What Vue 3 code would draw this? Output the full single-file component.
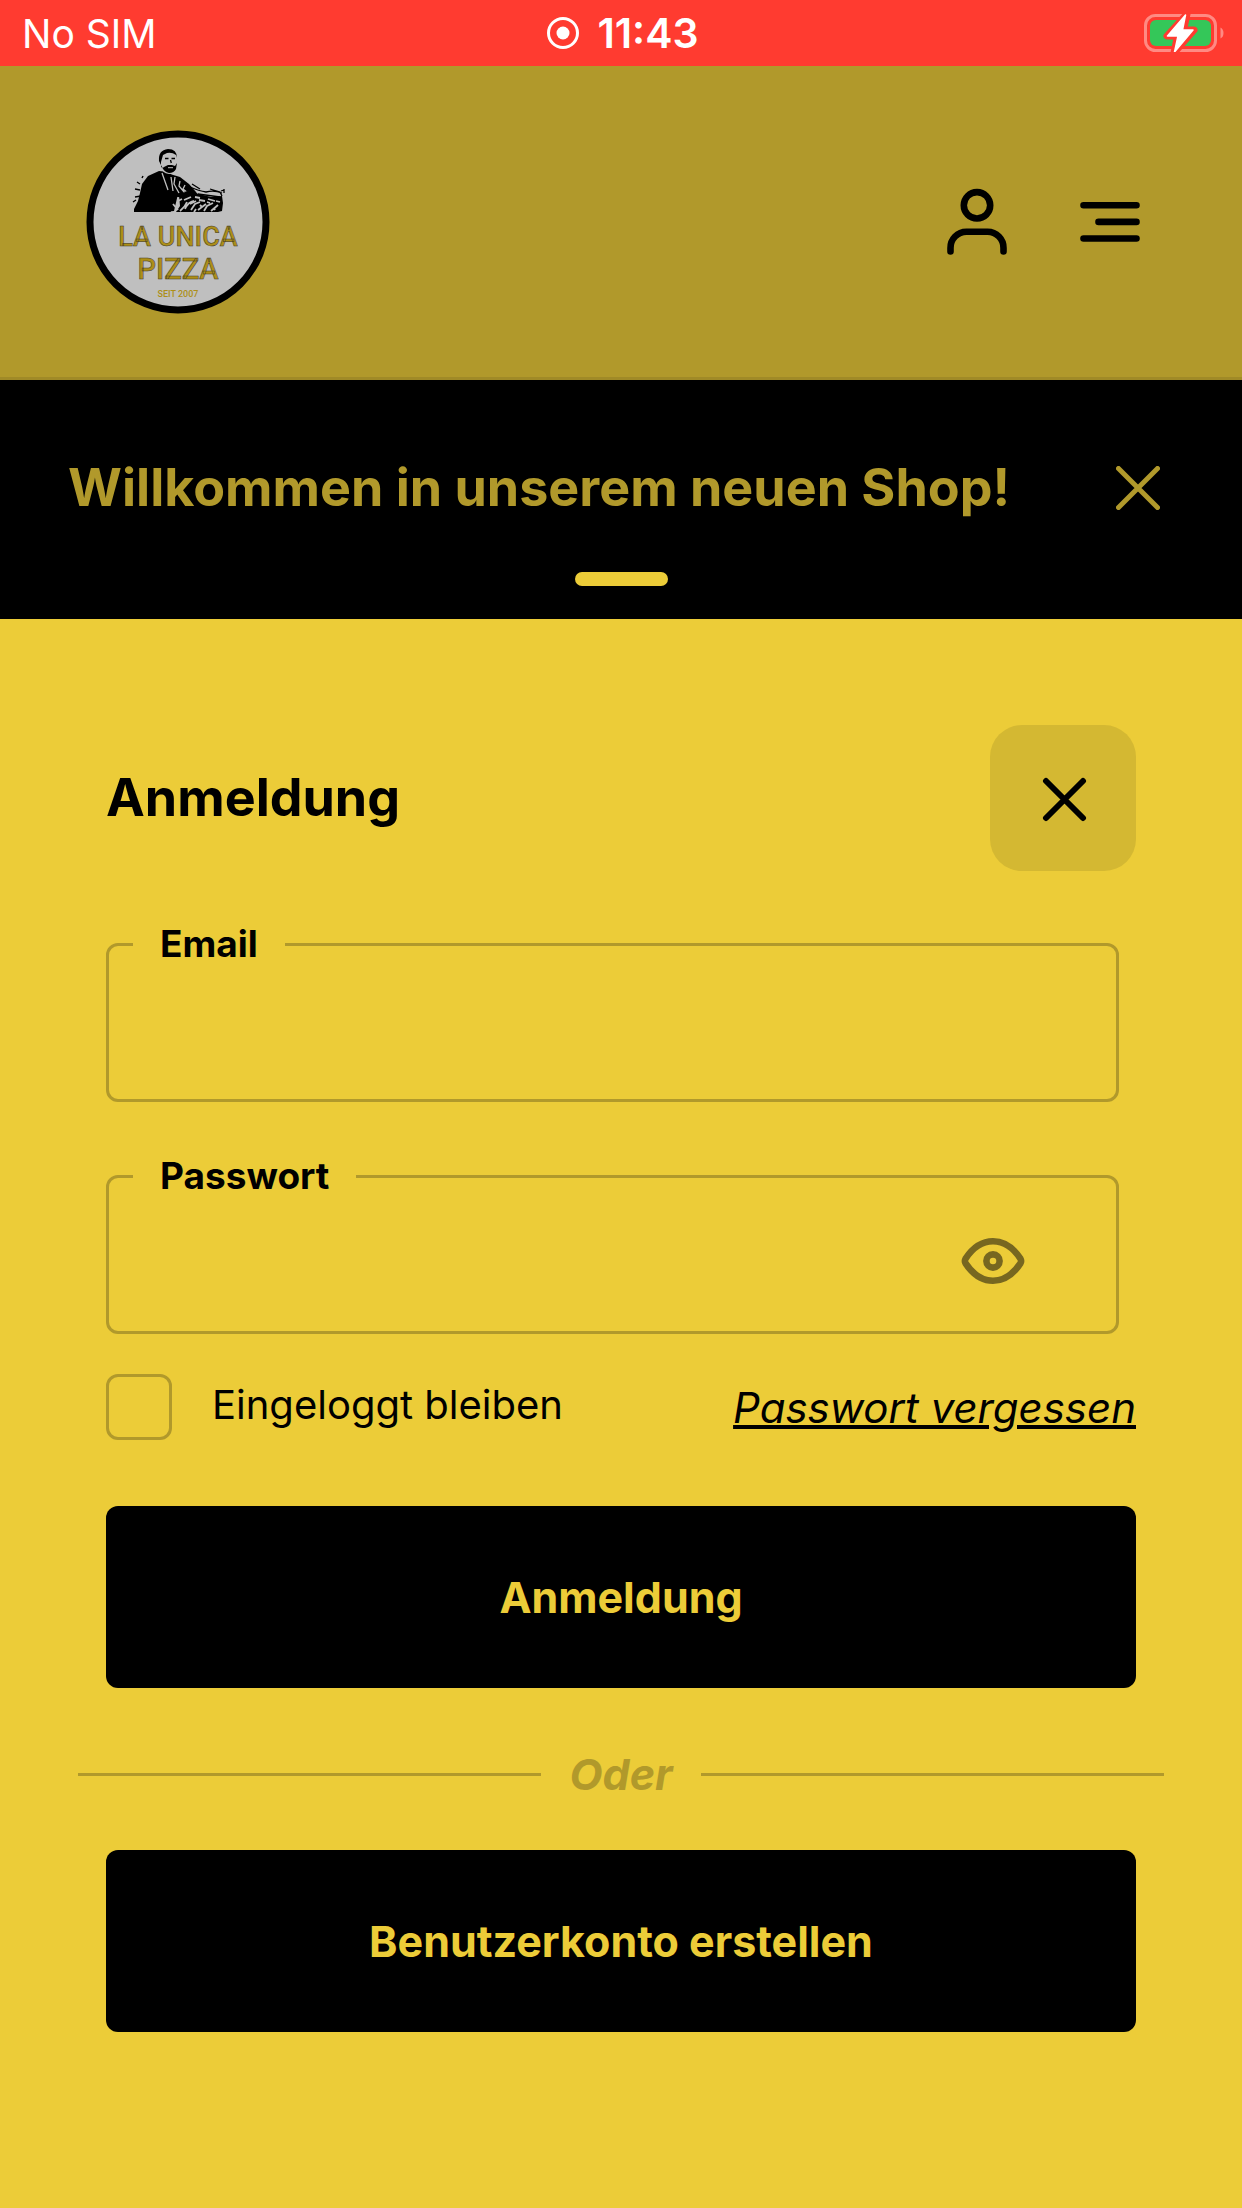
<script setup>
import { ref } from 'vue'

const email = ref('')
const password = ref('')
const remember = ref(false)
const revealed = ref(false)
</script>

<template>
  <div class="app">
    <div class="status">
      <span class="carrier">No SIM</span>
      <span class="clock">
        <svg width="32" height="32" viewBox="0 0 32 32" aria-hidden="true">
          <circle cx="16" cy="16" r="14.5" fill="none" stroke="#fff" stroke-width="3" />
          <circle cx="16" cy="16" r="6.5" fill="#fff" />
        </svg>
        <span>11:43</span>
      </span>
      <svg class="battery" width="80" height="38" viewBox="0 0 80 38" aria-hidden="true">
        <rect x="1.5" y="1.5" width="70" height="35" rx="10" fill="none" stroke="#ff8a83" stroke-width="3" />
        <path d="M76.500 13.500q3 1.500 3 5.500t-3 5.500z" fill="#ff8a83" />
        <rect x="6" y="6" width="61" height="26" rx="6" fill="#34c759" />
        <path d="M43 0 23 22h10.500L30 39 50 16H39.500z" fill="#ff3b30" stroke="#ff3b30" stroke-width="7" stroke-linejoin="round" />
        <path d="M41.500 1 23.500 22H34l-3.500 16L49 16H38.500z" fill="#fff" stroke="#fff" stroke-width="1.500" stroke-linejoin="round" />
      </svg>
    </div>

    <header class="header">
      <a class="logo" href="#" aria-label="La Unica Pizza">
        <svg width="184" height="184" viewBox="0 0 184 184">
          <circle cx="92" cy="92" r="88" fill="#bfbfbf" stroke="#000" stroke-width="7" />
          <path d="M73 41l-11 5-6 8-2 9-2 8-4 8v3h30l10-1 4-17-2-14-7-8z" fill="#000" />
          <path d="M54 54l-3-2M54 60l-5-1M56 48l1-2M55 66l-6 1M50 70l-3 2" stroke="#000" stroke-width="1.400" />
          <path d="M84 44l10 3 9 7 7 8 2 3-12 3-16-2z" fill="#000" />
          <path d="M76 43l6 17M85 47l2 14M89 47l-1 7 5 9M94 51l-1 5 6 7M99 55l-2 4 5 4" stroke="#bfbfbf" stroke-width="1.300" fill="none" />
          <path d="M73 25q2-5 9-5 8 0 9 7l-1 12q-2 5-7 5-7-1-9-8z" fill="#bfbfbf" />
          <path d="M73 31q-1-11 9-12 9 0 9 9l-1-3q-4-3-9-2l-4 2-2 7v5q2 1 3 0l4-2h4l3 1 2-3-1 6q-2 4-7 4-5-1-7-6z" fill="#000" />
          <path d="M79 28.500h3.500M85.500 28.500H89M84.500 30l.800 3" stroke="#000" stroke-width="1.300" />
          <path d="M82 37.700h5" stroke="#bfbfbf" stroke-width="1" />
          <path d="M49 79l20-3 13 0 3 6H49z" fill="#000" />
          <path d="M93 65l8-4 12 3 12 3 11-1 1 7-1 8-4 1H90l4-6z" fill="#000" />
          <path d="M94 81q5-4 7-9M87 74l5 6M99 79q3-7 9-8M98 70l7-3M105 80l4-6 5-2M112 80l8-6M118 81l3-5 6-3M125 81l7-6M104 74l6-3M113 70l6 1M122 69l7 2M109 67l5 1M116 77l-2-2M130 71l4 1M128 78l1 2M92 71l4-2M108 82l2-3M121 72l3 1" stroke="#bfbfbf" stroke-width="1.800" fill="none" />
          <path d="M104 57q9 4 16 5 8-2 16 1M112 64l22 3M124 59l10 3 2 4M135 61l3-1M106 54l8 5M138 59v4" stroke="#000" stroke-width="1.300" fill="none" />
          <g text-anchor="middle" fill="#ad8f18" stroke="#3d3828" stroke-width="0.500" font-weight="500">
            <text x="92" y="116" font-size="27">LA UNICA</text>
            <text x="92" y="149" font-size="29">PIZZA</text>
            <text x="92" y="167" font-size="9" stroke="none">SEIT 2007</text>
          </g>
        </svg>
      </a>
      <nav class="actions">
        <button type="button" class="icon" aria-label="Benutzerkonto">
          <svg width="60" height="68" viewBox="0 0 60 68" fill="none" stroke="#000" stroke-width="6.600" stroke-linecap="round">
            <circle cx="30" cy="17.300" r="13.200" />
            <path d="M3.500 63.500v-3.500a16 16 0 0 1 16-16.300h21a16 16 0 0 1 16 16.300v3.500" />
          </svg>
        </button>
        <button type="button" class="icon" aria-label="Menü">
          <svg width="60" height="42" viewBox="0 0 60 42" fill="none" stroke="#000" stroke-width="6.600" stroke-linecap="round">
            <path d="M3.500 4.200h53M18.500 20.900h38M3.500 37.500h53" />
          </svg>
        </button>
      </nav>
    </header>

    <section class="banner">
      <div class="banner-row">
        <p>Willkommen in unserem neuen Shop!</p>
        <button type="button" class="icon" aria-label="Hinweis schließen">
          <svg width="44" height="44" viewBox="0 0 44 44" fill="none" stroke="#b1992b" stroke-width="5" stroke-linecap="round">
            <path d="M2.500 2.500l39 39M41.500 2.500l-39 39" />
          </svg>
        </button>
      </div>
      <div class="handle"></div>
    </section>

    <main class="sheet">
      <div class="sheet-head">
        <h1>Anmeldung</h1>
        <button type="button" class="close" aria-label="Schließen">
          <svg width="48" height="48" viewBox="0 0 48 48" fill="none" stroke="#000" stroke-width="6" stroke-linecap="round">
            <path d="M7 7l37 37M44 7l-37 37" />
          </svg>
        </button>
      </div>

      <form @submit.prevent>
        <fieldset class="field">
          <legend><label for="email">Email</label></legend>
          <input id="email" v-model="email" type="email" />
        </fieldset>
        <fieldset class="field">
          <legend><label for="password">Passwort</label></legend>
          <input id="password" v-model="password" :type="revealed ? 'text' : 'password'" />
          <button type="button" class="icon reveal" aria-label="Passwort anzeigen" @click="revealed = !revealed">
            <svg width="66" height="48" viewBox="0 0 66 48" fill="none" stroke="#776720" stroke-width="6.600">
              <path d="M5.600 21.600Q17 4.300 33 4.300T60.400 21.600Q61.800 24 60.400 26.400Q49 43.700 33 43.700T5.600 26.400Q4.200 24 5.600 21.600Z" />
              <circle cx="33" cy="24" r="6.600" />
            </svg>
          </button>
        </fieldset>

        <div class="options">
          <label class="remember">
            <input v-model="remember" type="checkbox" />
            <span>Eingeloggt bleiben</span>
          </label>
          <a href="#">Passwort vergessen</a>
        </div>

        <button type="submit" class="primary">Anmeldung</button>
      </form>

      <div class="divider"><span>Oder</span></div>

      <button type="button" class="primary">Benutzerkonto erstellen</button>
    </main>
  </div>
</template>

<style>
body {
  background: #eccc38;
}
</style>

<style scoped>
.app {
  color: #000;
  background: #eccc38;
  font-family: Inter, "Liberation Sans", sans-serif;
  font-size: 40px;
}

button {
  padding: 0;
  border: 0;
  font: inherit;
  cursor: pointer;
}

svg {
  display: block;
}

.icon {
  display: flex;
  background: none;
}

.status {
  display: grid;
  grid-template-columns: 1fr auto 1fr;
  align-items: center;
  height: 66px;
  padding: 0 18px 0 22px;
  color: #fff;
  background: #ff3b30;
}

.carrier {
  font-size: 39px;
}

.clock {
  display: flex;
  align-items: center;
  gap: 18px;
  font-size: 41px;
  font-weight: 600;
}

.battery {
  justify-self: end;
}

.header {
  display: flex;
  align-items: center;
  justify-content: space-between;
  height: 314px;
  box-sizing: border-box;
  padding: 0 102px 0 86px;
  background: #b1992b;
  border-bottom: 3px solid #a08a27;
}

.logo text {
  font-family: Roboto, "Liberation Sans", sans-serif;
}

.actions {
  display: flex;
  align-items: center;
  gap: 73px;
}

.banner {
  height: 239px;
  box-sizing: border-box;
  padding-top: 76px;
  color: #b1992b;
  background: #000;
}

.banner-row {
  display: flex;
  align-items: center;
  justify-content: space-between;
  padding: 0 82px 0 68px;
}

.banner p {
  margin: 0;
  font-size: 52px;
  font-weight: 700;
  line-height: 64px;
}

.handle {
  width: 93px;
  height: 14px;
  margin: 52px auto 0;
  border-radius: 7px;
  background: #eccc38;
}

.sheet {
  padding: 106px 106px 174px;
}

.sheet-head {
  display: flex;
  align-items: center;
  justify-content: space-between;
  margin-bottom: 49px;
}

h1 {
  margin: 0;
  font-size: 52px;
  font-weight: 700;
  line-height: 64px;
}

.close {
  display: grid;
  place-items: center;
  width: 146px;
  height: 146px;
  border-radius: 32px;
  background: #d4b832;
}

.field {
  display: flex;
  height: 182px;
  box-sizing: border-box;
  margin: 0 17px 50px 0;
  padding: 0 90px 0 24px;
  border: 3px solid #b1992b;
  border-radius: 12px;
}

legend {
  padding: 0 27px;
  font-size: 37px;
  font-weight: 700;
  line-height: 48px;
}

.field input {
  flex: 1;
  min-width: 0;
  padding: 0 26px;
  border: 0;
  outline: 0;
  background: none;
  font: inherit;
}

.reveal {
  align-self: flex-start;
  padding-top: 37px;
}

.options {
  display: flex;
  align-items: center;
  justify-content: space-between;
  margin: -10px 0 66px;
}

.remember {
  display: flex;
  gap: 40px;
  line-height: 62px;
}

.remember input {
  appearance: none;
  width: 66px;
  height: 66px;
  margin: 0;
  border: 3px solid #b1992b;
  border-radius: 12px;
}

.remember input:checked {
  background: #000;
}

.options a {
  color: inherit;
  font-size: 42px;
  font-style: italic;
  text-decoration-thickness: 4px;
}

.primary {
  display: block;
  width: 100%;
  height: 182px;
  border-radius: 12px;
  color: #eccc38;
  background: #000;
  font-size: 43px;
  font-weight: 700;
}

.divider {
  display: flex;
  align-items: center;
  gap: 28px;
  margin: 59px -28px 49px;
  color: #b1992b;
  font-size: 43px;
  font-style: italic;
  font-weight: 700;
  line-height: 54px;
}

.divider::before,
.divider::after {
  content: "";
  flex: 1;
  height: 3px;
  background: #b1992b;
}
</style>
